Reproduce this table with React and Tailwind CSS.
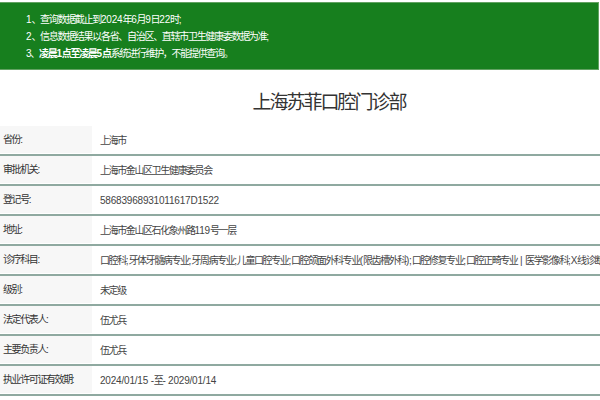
const ROWS = [
  { label: "省份:", value: "上海市" },
  { label: "审批机关:", value: "上海市金山区卫生健康委员会" },
  { label: "登记号:", value: "58683968931011617D1522" },
  { label: "地址:", value: "上海市金山区石化象州路119号一层" },
  {
    label: "诊疗科目:",
    value:
      "口腔科;牙体牙髓病专业;牙周病专业;儿童口腔专业;口腔颌面外科专业(限齿槽外科);口腔修复专业;口腔正畸专业 | 医学影像科;X线诊断专业",
  },
  { label: "级别:", value: "未定级" },
  { label: "法定代表人:", value: "伍尤兵" },
  { label: "主要负责人:", value: "伍尤兵" },
  { label: "执业许可证有效期:", value: "2024/01/15 -至- 2029/01/14" },
];

// latin runs keep normal spacing, CJK gets squeezed
function Txt({ text }) {
  return text.split(/([\x20-\x7E]+)/).map((part, i) =>
    /^[\x20-\x7E]+$/.test(part) ? (
      <span key={i} className="tracking-[-0.2px]">{part}</span>
    ) : (
      <span key={i}>{part}</span>
    )
  );
}

export default function App() {
  return (
    <div
      className="w-[600px] h-[400px] overflow-hidden bg-white text-[#333]"
      style={{ fontFamily: "'Liberation Sans', 'Noto Sans CJK SC', sans-serif" }}
    >
      <div className="mt-[2px] mr-[1px] h-[68px] bg-[#177f1e] border border-l-0 border-[#62a262] pl-[26px] pt-[8px] text-white text-[10px] leading-[17px] tracking-[-1.3px]">
        <p><Txt text="1、查询数据截止到2024年6月9日22时;" /></p>
        <p><Txt text="2、信息数据结果以各省、自治区、直辖市卫生健康委数据为准;" /></p>
        <p>
          3、<span className="font-bold"><Txt text="凌晨1点至凌晨5点" /></span>系统进行维护，不能提供查询。
        </p>
      </div>

      <h1 className="pl-[58px] pt-[23px] pb-[13px] text-center text-[19px] leading-[20px] tracking-[-2px] text-[#333]">
        上海苏菲口腔门诊部
      </h1>

      <div className="text-[10px] tracking-[-1.4px]">
        {ROWS.map((r) => (
          <div key={r.label} className="flex h-[30px] border-b-2 border-[#8fa9a0]">
            <div className="w-[92px] shrink-0 bg-[#f7f7f7] pl-[3px] flex items-center mb-[1px]">
              {r.label}
            </div>
            <div className="pl-[8px] flex items-center whitespace-nowrap text-[#444]">
              <span><Txt text={r.value} /></span>
            </div>
          </div>
        ))}
      </div>
    </div>
  );
}
